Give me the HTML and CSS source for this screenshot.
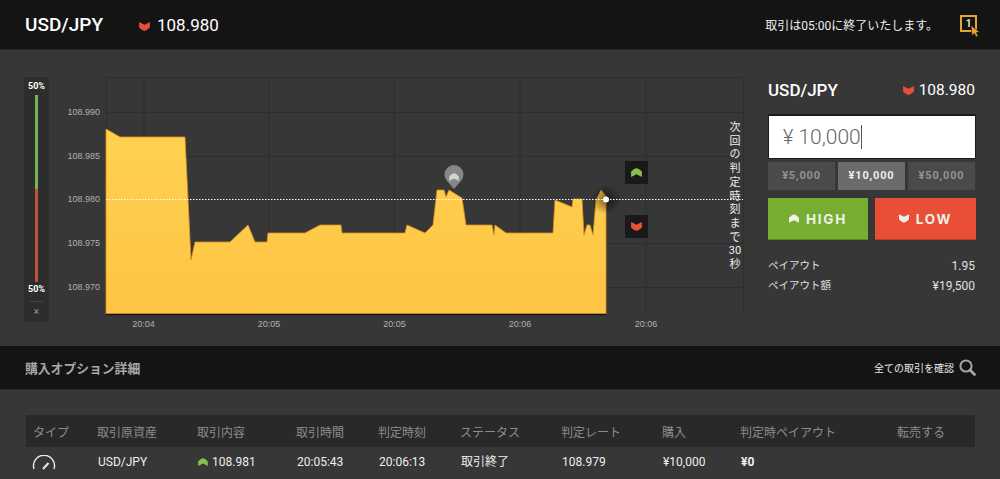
FILE: index.html
```html
<!DOCTYPE html>
<html lang="ja">

<head>
	<meta charset="UTF-8" />
	<title>USD/JPY</title>
	<link rel="stylesheet" href="styles.css">
</head>

<body>
	<svg class="defs" width="0" height="0">
		<symbol id="up" viewBox="0 0 12 10">
			<path d="M0 4 L3 1.5 L6 0 L9 1.5 L12 4 V10 L6 7 L0 10 Z" />
		</symbol>
		<symbol id="down" viewBox="0 0 12 10">
			<path d="M0 0 L6 3 L12 0 V6 L9 8.5 L6 10 L3 8.5 L0 6 Z" />
		</symbol>
	</svg>

	<!-- top bar -->
	<div class="topbar">
		<span class="pair">USD/JPY</span>
		<svg class="arrow arrow-top red"><use href="#down" /></svg>
		<span class="rate">108.980</span>
		<span class="notice">取引は05:00に終了いたします。</span>
		<svg class="one-click" width="20" height="22" viewBox="0 0 20 22">
			<rect x="1" y="1" width="15" height="15" fill="none" stroke="#e5a534" stroke-width="2" />
			<text x="8.500" y="12" class="one-digit">1</text>
			<path d="M11 10.500 L19.500 17 L16.400 17.600 L18 21 L16 22 L14.500 18.500 L12 20.500 Z" fill="#e5a534" stroke="#141414" stroke-width="0.600" />
		</svg>
	</div>

	<!-- trade area -->
	<div class="trade">
		<div class="gauge">
			<span class="gauge-pct">50%</span>
			<div class="gauge-bar">
				<div class="gauge-high"></div>
				<div class="gauge-low"></div>
			</div>
			<span class="gauge-pct">50%</span>
			<div class="gauge-line"></div>
			<span class="gauge-close">×</span>
		</div>

		<div class="chart">
			<svg class="chart-svg" width="700" height="258" viewBox="50 77 700 258">
				<defs>
					<linearGradient id="fill" x1="0" y1="0" x2="0" y2="1">
						<stop offset="0" stop-color="#ffd14f" />
						<stop offset="1" stop-color="#ffc444" />
					</linearGradient>
					<radialGradient id="glow">
						<stop offset="0" stop-color="#000" stop-opacity="0.55" />
						<stop offset="1" stop-color="#000" stop-opacity="0" />
					</radialGradient>
				</defs>

				<path class="grid" d="M106.500 77.500 H743.500 V314 M106.500 77.500 V314" />
				<path class="grid" d="M144 77 V314 M269 77 V314 M394.500 77 V314 M520 77 V314 M646 77 V314" />
				<path class="grid" d="M106 112.500 H743 M106 156.500 H743 M106 243.500 H743 M106 287.500 H743" />

				<polygon class="area" points="106,129 120,137 185,137 191,260 195,242 230,242 248,225 255,242 267,242 268,233 305,233 320,225 341,225 342,233 405,233 407,225 425,233 433,225 437,190 444,190 446,197 449,190 462,198 466,225 492,225 494,235 495,225 506,233 553,233 555,200 572,207 573,199 582,199 584,235 587,225 590,225 593,235 596,200 601,190 606,196 606,314 106,314" />
				<path class="base" d="M106 314.500 H606" />

				<circle cx="606" cy="199.500" r="15" fill="url(#glow)" />
				<path class="rate-line" d="M106 199.500 H743" />
				<circle cx="606" cy="199.500" r="3" fill="#fff" />

				<path d="M454 189 L447 181 A9.500 9.500 0 1 1 461 181 Z" fill="#868686" />
				<use href="#up" x="449" y="173" width="10" height="8" fill="#d4d4d4" />

				<rect x="625" y="161" width="23" height="23" fill="#191919" />
				<use href="#up" x="631" y="168" width="11" height="9" fill="#86bf4c" />
				<rect x="625" y="215" width="23" height="23" fill="#191919" />
				<use href="#down" x="631" y="222" width="11" height="9" fill="#e8503a" />

				<text class="axis" x="100" y="115" text-anchor="end">108.990</text>
				<text class="axis" x="100" y="158.500" text-anchor="end">108.985</text>
				<text class="axis" x="100" y="202" text-anchor="end">108.980</text>
				<text class="axis" x="100" y="246" text-anchor="end">108.975</text>
				<text class="axis" x="100" y="289.500" text-anchor="end">108.970</text>

				<text class="axis" x="143.500" y="327" text-anchor="middle">20:04</text>
				<text class="axis" x="269" y="327" text-anchor="middle">20:05</text>
				<text class="axis" x="394.500" y="327" text-anchor="middle">20:05</text>
				<text class="axis" x="520" y="327" text-anchor="middle">20:06</text>
				<text class="axis" x="646" y="327" text-anchor="middle">20:06</text>
			</svg>
			<div class="countdown">
				<span>次</span><span>回</span><span>の</span><span>判</span><span>定</span><span>時</span><span>刻</span><span>ま</span><span>で</span><span>30</span><span>秒</span>
			</div>
		</div>

		<div class="order">
			<div class="order-head">
				<span class="order-pair">USD/JPY</span>
				<svg class="arrow arrow-order red"><use href="#down" /></svg>
				<span class="order-rate">108.980</span>
			</div>
			<div class="amount"><span class="yen">¥</span> 10,000<span class="caret"></span></div>
			<div class="presets">
				<div class="preset">¥5,000</div>
				<div class="preset active">¥10,000</div>
				<div class="preset">¥50,000</div>
			</div>
			<div class="actions">
				<div class="action high"><svg class="arrow arrow-btn"><use href="#up" /></svg>HIGH</div>
				<div class="action low"><svg class="arrow arrow-btn"><use href="#down" /></svg>LOW</div>
			</div>
			<div class="payout"><span>ペイアウト</span><span class="payout-val">1.95</span></div>
			<div class="payout"><span>ペイアウト額</span><span class="payout-val">¥19,500</span></div>
		</div>
	</div>

	<!-- options header -->
	<div class="section-bar">
		<span class="section-title">購入オプション詳細</span>
		<span class="section-link">全ての取引を確認</span>
		<svg class="search" width="17" height="17" viewBox="0 0 17 17">
			<circle cx="7" cy="7" r="5.600" fill="none" stroke="#a5a5a5" stroke-width="2" />
			<path d="M11 11 L15.500 15.500" stroke="#a5a5a5" stroke-width="2.800" stroke-linecap="round" />
		</svg>
	</div>

	<div class="history">
		<table id="trades">
			<colgroup>
				<col class="c1"><col class="c2"><col class="c3"><col class="c4"><col class="c5">
				<col class="c6"><col class="c7"><col class="c8"><col class="c9"><col class="c10">
			</colgroup>
			<thead>
				<tr>
					<th>タイプ</th>
					<th>取引原資産</th>
					<th>取引内容</th>
					<th>取引時間</th>
					<th>判定時刻</th>
					<th>ステータス</th>
					<th>判定レート</th>
					<th>購入</th>
					<th>判定時ペイアウト</th>
					<th>転売する</th>
				</tr>
			</thead>
			<tbody>
				<tr>
					<td>
						<svg class="speed" width="24" height="15" viewBox="0 0 24 15">
							<path d="M2 14 A10.500 10.500 0 1 1 22 14" fill="none" stroke="#e8e8e8" stroke-width="1.500" />
							<path d="M11 14 L16.500 8" stroke="#e8e8e8" stroke-width="2" />
						</svg>
					</td>
					<td>USD/JPY</td>
					<td><svg class="arrow arrow-row green"><use href="#up" /></svg>108.981</td>
					<td>20:05:43</td>
					<td>20:06:13</td>
					<td class="status">取引終了</td>
					<td>108.979</td>
					<td>¥10,000</td>
					<td class="strong">¥0</td>
					<td></td>
				</tr>
			</tbody>
		</table>
	</div>
</body>

</html>
```

FILE: styles.css
```css
* {
	box-sizing: border-box;
}

html,
body {
	height: 100%;
	overflow: hidden;
}

body {
	margin: 0;
	background-color: #373737;
	color: #fff;
	font-family: Roboto, "Noto Sans CJK JP", sans-serif;
}

.defs {
	display: block;
	height: 0;
}

.arrow {
	fill: #fff;
	flex: none;
}

.red {
	fill: #e2503c;
}

.green {
	fill: #86bf4c;
}

/* top bar */
.topbar {
	display: flex;
	align-items: center;
	height: 50px;
	padding: 0 20px 0 25px;
	background-color: #141414;
	border-bottom: 1px solid #2a2a2a;
}

.pair {
	font-size: 19px;
	font-weight: 500;
	width: 114px;
}

.arrow-top {
	width: 11px;
	height: 9px;
	margin-top: 3px;
	margin-right: 7px;
}

.rate {
	font-size: 17px;
}

.notice {
	margin-left: auto;
	font-size: 12px;
	color: #eee;
}

.one-click {
	margin-left: 22px;
	margin-top: 3px;
}

.one-digit {
	font-size: 10px;
	font-weight: 700;
	fill: #f4e2b8;
	text-anchor: middle;
}

/* trade area */
.trade {
	display: flex;
	height: 296px;
	padding: 27px 24px 0 24px;
}

.gauge {
	display: flex;
	flex-direction: column;
	align-items: center;
	flex: none;
	width: 25px;
	height: 245px;
	padding-top: 4px;
	background-color: #2d2d2d;
}

.gauge-pct {
	font-size: 9px;
	font-weight: 700;
	line-height: 11px;
}

.gauge-bar {
	display: flex;
	flex-direction: column;
	width: 3px;
	height: 187px;
	margin: 3px 0 2px;
}

.gauge-high {
	flex: 1;
	background-color: #7cb257;
}

.gauge-low {
	flex: 1;
	background-color: #b9533a;
}

.gauge-line {
	width: 13px;
	height: 1px;
	margin-top: 6px;
	background-color: #444;
}

.gauge-close {
	margin-top: 2px;
	font-size: 10px;
	line-height: 16px;
	color: #999;
}

.chart {
	position: relative;
	flex: none;
	width: 700px;
	margin-left: 1px;
	margin-right: 18px;
}

.chart-svg {
	display: block;
}

.grid {
	fill: none;
	stroke: #2e2e2e;
	stroke-width: 1;
}

.area {
	fill: url(#fill);
	stroke: #d8921f;
	stroke-width: 0.800;
}

.base {
	stroke: #141414;
	stroke-width: 1.500;
}

.rate-line {
	stroke: #fff;
	stroke-width: 1;
	stroke-dasharray: 1.500 1.500;
}

.axis {
	font-family: "Liberation Sans", sans-serif;
	font-size: 9px;
	fill: #b0b0b0;
}

.countdown {
	position: absolute;
	top: 44px;
	left: 675px;
	display: flex;
	flex-direction: column;
	align-items: center;
	width: 20px;
	font-size: 11px;
	line-height: 13.700px;
	color: #eee;
}

/* order panel */
.order {
	flex: none;
	width: 208px;
}

.order-head {
	display: flex;
	align-items: center;
	height: 25px;
	margin-bottom: 12px;
}

.order-pair {
	font-size: 17px;
	font-weight: 500;
	margin-right: auto;
}

.arrow-order {
	width: 11px;
	height: 9px;
	margin-top: 2px;
	margin-right: 5px;
}

.order-rate {
	font-size: 15.500px;
	margin-right: 1px;
}

.amount {
	display: flex;
	align-items: center;
	height: 45px;
	padding-left: 14px;
	background-color: #fff;
	border: 1px solid #1c1c1c;
	border-top-width: 2px;
	font-size: 21px;
	font-weight: 300;
	color: #666;
	white-space: pre;
}

.yen {
	font-size: 20px;
}

.caret {
	display: inline-block;
	width: 1px;
	height: 24px;
	background-color: #555;
}

.presets {
	display: flex;
	gap: 3px;
	margin-top: 3px;
	padding-right: 1px;
}

.preset {
	flex: 1;
	height: 28px;
	background-color: #4a4a4a;
	color: #939393;
	font-size: 11px;
	font-weight: 700;
	letter-spacing: 0.800px;
	line-height: 28px;
	text-align: center;
}

.preset.active {
	background-color: #6b6b6b;
	color: #eee;
}

.actions {
	display: flex;
	justify-content: space-between;
	margin-top: 8px;
}

.action {
	display: flex;
	align-items: center;
	justify-content: center;
	width: 100px;
	height: 42px;
	font-family: Inter, sans-serif;
	font-size: 13.500px;
	font-weight: 700;
	letter-spacing: 1.700px;
	color: #f0f0e8;
}

.arrow-btn {
	width: 10px;
	height: 9px;
	margin-right: 7px;
	fill: #f0f0e8;
}

.high {
	background-color: #76ae32;
	border-bottom: 1px solid #5a8a28;
}

.low {
	width: 101px;
	background-color: #e94f37;
	border-bottom: 1px solid #b83e2b;
}

.payout {
	display: flex;
	justify-content: space-between;
	align-items: center;
	height: 20px;
	padding-right: 1px;
	font-size: 10.500px;
	line-height: 20px;
	color: #e0e0e0;
}

.payout-val {
	font-size: 12px;
}

.actions + .payout {
	margin-top: 16px;
}

/* options header */
.section-bar {
	display: flex;
	align-items: center;
	height: 44px;
	padding: 0 24px 0 25px;
	background-color: #141414;
	border-bottom: 1px solid #2a2a2a;
}

.section-title {
	font-size: 12.800px;
	font-weight: 700;
	color: #a8a8a8;
	margin-right: auto;
}

.section-link {
	font-size: 10px;
	color: #e8e8e8;
}

.search {
	margin-left: 5px;
}

/* history table */
.history {
	padding: 25px 25px 0 26px;
}

#trades {
	width: 949px;
	border-collapse: collapse;
	table-layout: fixed;
	font-size: 12px;
}

#trades th {
	height: 32px;
	padding: 0 0 0 7px;
	background-color: #292929;
	color: #8d8d8d;
	font-weight: 400;
	text-align: left;
	white-space: nowrap;
}

#trades td {
	height: 30px;
	padding: 0 0 0 8px;
	color: #eee;
	white-space: nowrap;
}

#trades .status {
	line-height: 14px;
	vertical-align: top;
	padding-top: 8px;
}

.c1 { width: 64px; }
.c2 { width: 100px; }
.c3 { width: 99px; }
.c4 { width: 82px; }
.c5 { width: 82px; }
.c6 { width: 101px; }
.c7 { width: 101px; }
.c8 { width: 78px; }
.c9 { width: 157px; }
.c10 { width: 85px; }

#trades .strong {
	font-weight: 700;
}

.speed {
	display: block;
	margin-left: -2px;
}

.arrow-row {
	display: inline-block;
	width: 10px;
	height: 8px;
	margin-right: 4px;
}
```
